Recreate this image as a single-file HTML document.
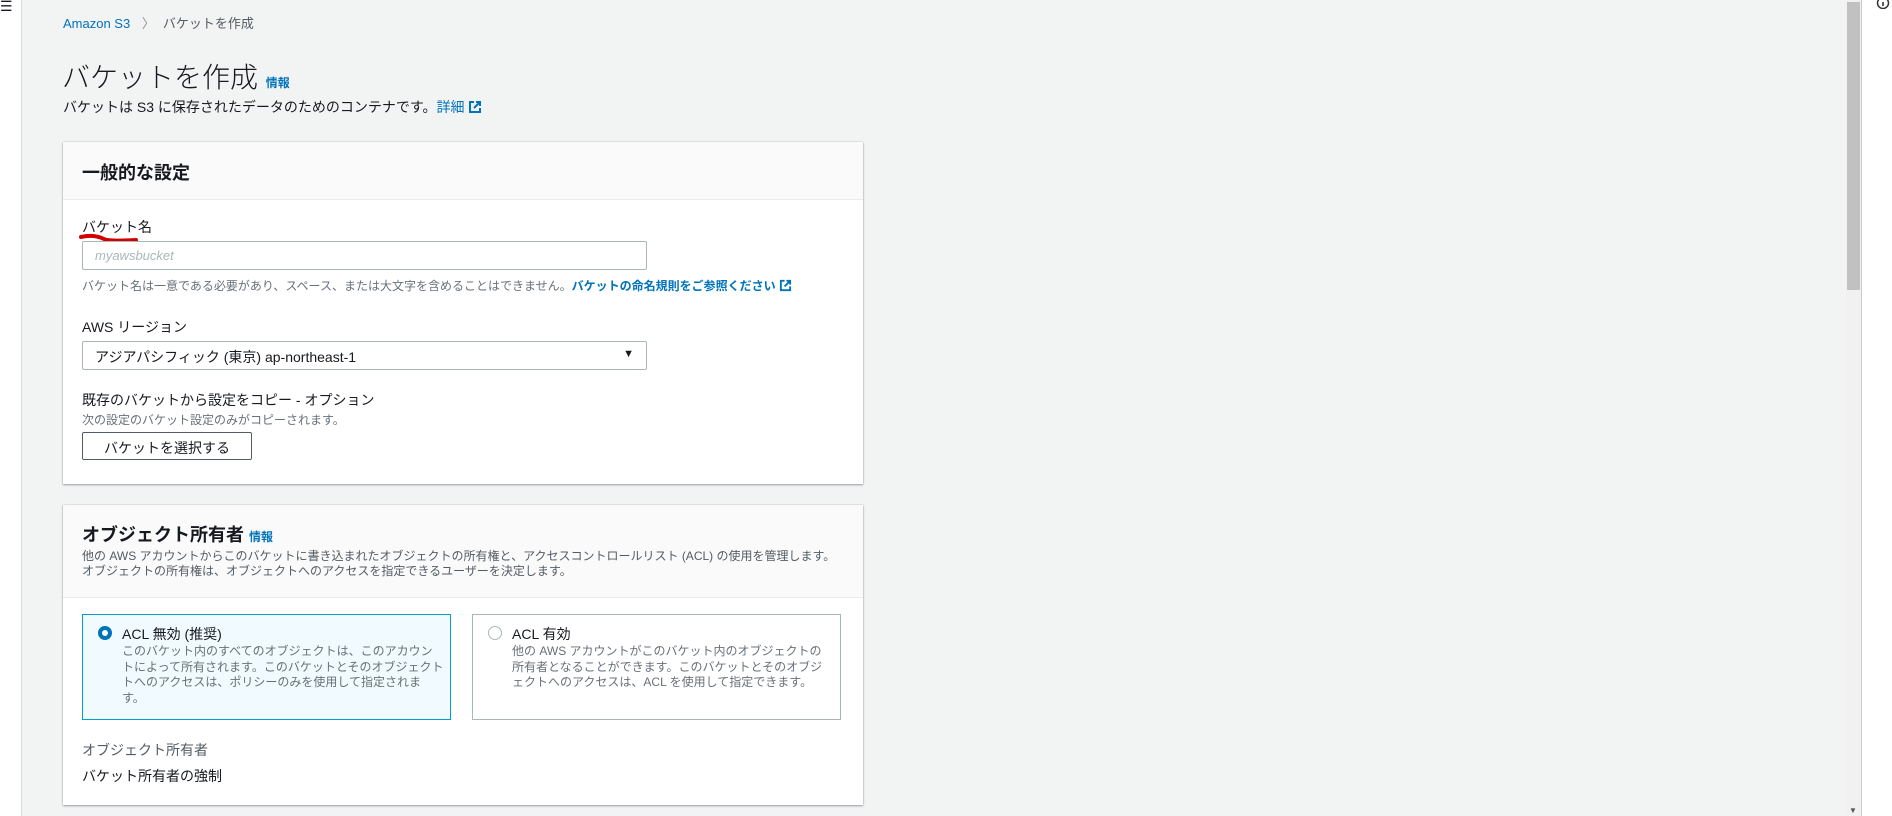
<!DOCTYPE html>
<html><head><meta charset="utf-8"><style>
*{box-sizing:border-box;margin:0;padding:0}
body{width:1892px;height:816px;overflow:hidden;background:#f2f3f3;font-family:"Liberation Sans","Noto Sans CJK JP",sans-serif;color:#16191f;position:relative;font-size:14px}
.abs{position:absolute;white-space:nowrap}
.side{position:absolute;left:0;top:0;width:22px;height:816px;background:#fff;border-right:1px solid #d5dbdb}
.right{position:absolute;left:1861px;top:0;width:31px;height:816px;background:#fff;border-left:1px solid #ccc}
.sb{position:absolute;left:1846px;top:0;width:15px;height:816px;background:#f1f1f1}
.thumb{position:absolute;left:1847px;top:2px;width:13px;height:288px;background:#c1c1c1}
.card{position:absolute;background:#fff;box-shadow:0 1px 2px rgba(0,28,36,.35),0 0 1px rgba(0,28,36,.3)}
.hdr{background:#fafafa;border-bottom:1px solid #eaeded}
.link{color:#0073bb}
.input{position:absolute;border:1px solid #aab7b8;border-radius:2px;background:#fff}
.small{font-size:12px;color:#687078}
.radio{position:absolute;border:1px solid #aab7b8;width:369px;height:106px}
.rc{position:absolute;width:14px;height:14px;border-radius:50%;border:1px solid #aab7b8;background:#fff}
</style></head><body>
<div class="side"></div>
<div class="abs" style="left:0;top:0;font-size:14px;line-height:12px">☰</div>
<div class="abs" style="left:63px;top:13px;font-size:13px"><span class="link">Amazon S3</span> <span style="color:#879596;margin:0 8px">〉</span><span style="color:#545b64">バケットを作成</span></div>
<div class="abs" style="left:62px;top:56px;font-size:28px;font-weight:300">バケットを作成 <span class="link" style="font-size:12px;font-weight:bold">情報</span></div>
<div class="abs" style="left:63px;top:97px;font-size:14px">バケットは S3 に保存されたデータのためのコンテナです。<span class="link">詳細 <svg width="14" height="14" viewBox="0 0 14 14" style="vertical-align:-2px"><path d="M6 2H2v10h10V8M8 2h4v4M12 2L6 8" fill="none" stroke="#0073bb" stroke-width="2"/></svg></span></div>

<div class="card" style="left:63px;top:142px;width:800px;height:342px">
 <div class="hdr" style="height:58px;padding:17px 19px;font-size:18px;font-weight:bold">一般的な設定</div>
</div>
<div class="abs" style="left:82px;top:217px;font-size:14px">バケット名</div>
<svg class="abs" style="left:78px;top:233px" width="62" height="12"><path d="M3 4C12 2 20 3 26 6 30 8 40 8 58 7" stroke="#d40000" stroke-width="4" fill="none" stroke-linecap="round"/></svg>
<div class="input" style="left:82px;top:241px;width:565px;height:29px;padding:6px 12px;font-style:italic;color:#aab7b8;font-size:13px">myawsbucket</div>
<div class="abs small" style="left:82px;top:277px">バケット名は一意である必要があり、スペース、または大文字を含めることはできません。<b class="link">バケットの命名規則をご参照ください</b> <svg width="13" height="13" viewBox="0 0 14 14" style="vertical-align:-2px"><path d="M6 2H2v10h10V8M8 2h4v4M12 2L6 8" fill="none" stroke="#0073bb" stroke-width="2"/></svg></div>
<div class="abs" style="left:82px;top:317px">AWS リージョン</div>
<div class="input" style="left:82px;top:341px;width:565px;height:29px;padding:5px 12px;font-size:14px;color:#16191f">アジアパシフィック (東京) ap-northeast-1<span style="position:absolute;right:12px;top:6px;font-size:11px">▼</span></div>
<div class="abs" style="left:82px;top:390px">既存のバケットから設定をコピー - オプション</div>
<div class="abs small" style="left:82px;top:411px">次の設定のバケット設定のみがコピーされます。</div>
<div class="input" style="left:82px;top:432px;width:170px;height:28px;border:1px solid #545b64;text-align:center;padding-top:5px;font-size:14px">バケットを選択する</div>

<div class="card" style="left:63px;top:505px;width:800px;height:300px">
 <div class="hdr" style="height:93px"></div>
</div>
<div class="abs" style="left:82px;top:521px;font-size:18px;font-weight:bold">オブジェクト所有者 <span class="link" style="font-size:12px">情報</span></div>
<div class="abs small" style="left:82px;top:549px;color:#545b64;line-height:15px">他の AWS アカウントからこのバケットに書き込まれたオブジェクトの所有権と、アクセスコントロールリスト (ACL) の使用を管理します。<br>オブジェクトの所有権は、オブジェクトへのアクセスを指定できるユーザーを決定します。</div>
<div class="radio" style="left:82px;top:614px;background:#f1faff;border-color:#00a1c9"></div>
<div class="rc" style="left:98px;top:626px;border:4px solid #0073bb"></div>
<div class="abs" style="left:122px;top:624px;font-size:14px">ACL 無効 (推奨)</div>
<div class="abs small" style="left:122px;top:644px;line-height:15.5px;color:#687078">このバケット内のすべてのオブジェクトは、このアカウン<br>トによって所有されます。このバケットとそのオブジェクト<br>トへのアクセスは、ポリシーのみを使用して指定されま<br>す。</div>
<div class="radio" style="left:472px;top:614px;background:#fff"></div>
<div class="rc" style="left:488px;top:626px"></div>
<div class="abs" style="left:512px;top:624px;font-size:14px">ACL 有効</div>
<div class="abs small" style="left:512px;top:644px;line-height:15.5px;color:#687078">他の AWS アカウントがこのバケット内のオブジェクトの<br>所有者となることができます。このバケットとそのオブジ<br>ェクトへのアクセスは、ACL を使用して指定できます。</div>
<div class="abs" style="left:82px;top:740px;color:#545b64">オブジェクト所有者</div>
<div class="abs" style="left:82px;top:766px">バケット所有者の強制</div>

<div class="sb"></div><div class="thumb"></div>
<div class="abs" style="left:1849px;top:806px;font-size:8px;color:#555">▼</div>
<div class="right"></div>
<svg class="abs" style="left:1876px;top:0" width="14" height="9"><circle cx="7" cy="3" r="5.5" fill="none" stroke="#333" stroke-width="1.5"/><rect x="6.2" y="2" width="1.6" height="4" fill="#333"/></svg>
</body></html>
